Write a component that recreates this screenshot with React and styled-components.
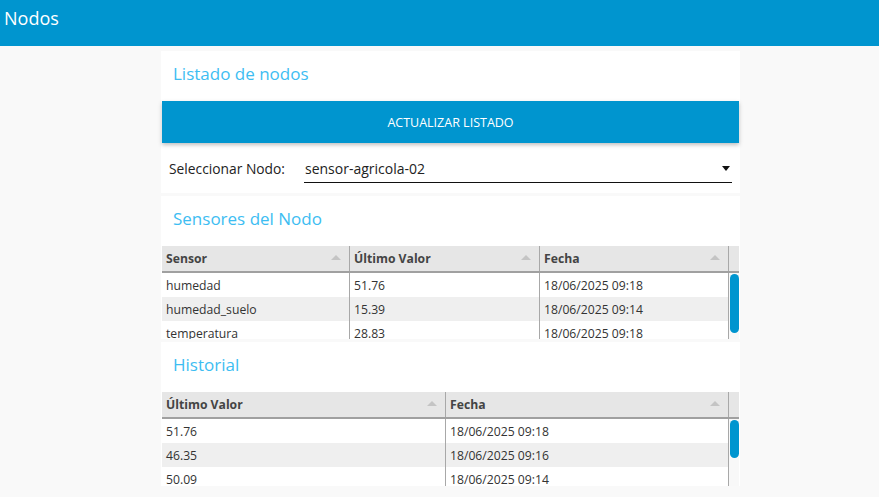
import React from 'react'
import styled, { createGlobalStyle } from 'styled-components'

const GlobalStyle = createGlobalStyle`
    html, body {
        margin: 0;
        padding: 0;
        background: #f9f9f9;
        font-family: "Open Sans", "Noto Sans", sans-serif;
        color: #333;
    }
`

const sensores = [
    ['humedad', '51.76', '18/06/2025 09:18'],
    ['humedad_suelo', '15.39', '18/06/2025 09:14'],
    ['temperatura', '28.83', '18/06/2025 09:18'],
]

const historial = [
    ['51.76', '18/06/2025 09:18'],
    ['46.35', '18/06/2025 09:16'],
    ['50.09', '18/06/2025 09:14'],
]

const DataGrid = ({ cols, headers, rows, bodyHeight, thumb }) => (
    <Grid $cols={cols}>
        <HeadRow>
            {headers.map(h => <Th key={h}>{h}<Sort /></Th>)}
            <div />
        </HeadRow>
        <Body $height={bodyHeight}>
            <Rows>
                {rows.map((r, i) => (
                    <Row key={i} $odd={i % 2 === 1}>
                        {r.map((c, j) => <Td key={j}>{c}</Td>)}
                    </Row>
                ))}
            </Rows>
            <Track><Thumb $height={thumb} /></Track>
        </Body>
    </Grid>
)

const App = () => {
    return (
        <Wrapper>
            <GlobalStyle />
            <TopBar>Nodos</TopBar>
            <Column>
                <Card>
                    <Title>Listado de nodos</Title>
                    <Button>ACTUALIZAR LISTADO</Button>
                    <SelectRow>
                        <label>Seleccionar Nodo:</label>
                        <Select>
                            <span>sensor-agricola-02</span>
                            <Caret />
                        </Select>
                    </SelectRow>
                </Card>

                <Card>
                    <Title>Sensores del Nodo</Title>
                    <DataGrid
                        cols="188px 190px 189px"
                        headers={['Sensor', 'Último Valor', 'Fecha']}
                        rows={sensores}
                        bodyHeight="66px"
                        thumb="59px"
                    />
                </Card>

                <Card>
                    <Title>Historial</Title>
                    <DataGrid
                        cols="284px 283px"
                        headers={['Último Valor', 'Fecha']}
                        rows={historial}
                        bodyHeight="67px"
                        thumb="38px"
                    />
                </Card>
            </Column>
        </Wrapper>
    )
}

export default App

const Wrapper = styled.main`
    min-height: 497px;
`

const TopBar = styled.header`
    height: 46px;
    background: #0095cf;
    color: #fff;
    font-size: 18px;
    line-height: 36px;
    padding-left: 4px;
    box-sizing: border-box;
`

const Column = styled.div`
    width: 579px;
    margin: 5px 0 0 161px;
    display: flex;
    flex-direction: column;
    gap: 3px;
`

const Card = styled.section`
    background: #fff;
    display: flex;
    flex-direction: column;
    padding: 0 1px;
`

const Title = styled.h2`
    margin: 0;
    height: 50px;
    line-height: 46px;
    padding-left: 11px;
    font-size: 17px;
    font-weight: 400;
    color: #3dbdf2;
`

const Button = styled.button`
    height: 42px;
    border: none;
    background: #0095cf;
    color: #fff;
    font-family: inherit;
    font-size: 12.5px;
    box-shadow: 0 2px 4px rgba(0, 0, 0, 0.25);
    cursor: pointer;
`

const SelectRow = styled.div`
    display: flex;
    align-items: center;
    height: 50px;
    padding: 0 7px 0 7px;
    font-size: 13.8px;
    color: #222;
    label {
        width: 135px;
    }
`

const Select = styled.div`
    flex: 1;
    display: flex;
    align-items: center;
    justify-content: space-between;
    height: 22px;
    margin-top: 4px;
    border-bottom: 1px solid #111;
    padding: 0 2px 2px 1px;
    font-size: 14px;
`

const Caret = styled.i`
    width: 0;
    height: 0;
    border-left: 4px solid transparent;
    border-right: 4px solid transparent;
    border-top: 5px solid #111;
`

const Grid = styled.div`
    display: flex;
    flex-direction: column;
    font-size: 12.2px;
    --cols: ${p => p.$cols};
`

const HeadRow = styled.div`
    display: grid;
    grid-template-columns: var(--cols) 1fr;
    height: 25px;
    background: #e6e6e6;
    border-bottom: 2px solid #a0a0a0;
`

const Th = styled.div`
    position: relative;
    display: flex;
    align-items: center;
    padding-left: 4px;
    font-weight: 700;
    color: #444;
    border-right: 1px solid #a8a8a8;
`

const Sort = styled.i`
    position: absolute;
    right: 8px;
    top: 9px;
    width: 0;
    height: 0;
    border-left: 5px solid transparent;
    border-right: 5px solid transparent;
    border-bottom: 5px solid #c4c4c4;
`

const Body = styled.div`
    display: flex;
    height: ${p => p.$height};
    overflow: hidden;
`

const Rows = styled.div`
    display: flex;
    flex-direction: column;
`

const Row = styled.div`
    display: grid;
    grid-template-columns: var(--cols);
    height: 24px;
    flex-shrink: 0;
    background: ${p => (p.$odd ? '#efefef' : '#fff')};
`

const Td = styled.div`
    display: flex;
    align-items: center;
    padding-left: 4px;
    color: #333;
    border-right: 1px solid #a8a8a8;
    white-space: nowrap;
    overflow: hidden;
`

const Track = styled.div`
    flex: 1;
    background: #f8f8f8;
    display: flex;
    justify-content: flex-end;
`

const Thumb = styled.div`
    width: 9px;
    height: ${p => p.$height};
    margin-top: 1px;
    border-radius: 5px;
    background: #0095cf;
`
